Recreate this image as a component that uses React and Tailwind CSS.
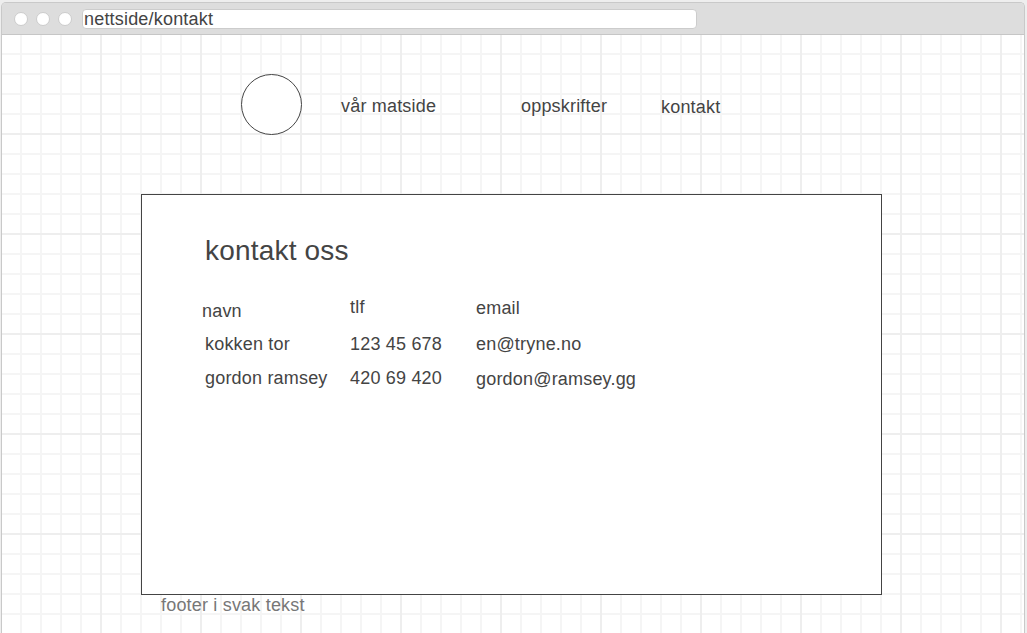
const nav = [
  { label: "vår matside", className: "w-[180px] pt-[22px]" },
  { label: "oppskrifter", className: "w-[140px] pt-[22px]" },
  { label: "kontakt", className: "pt-[23px]" },
];

const columns = [
  {
    className: "w-[148px] pt-1",
    cells: [
      { text: "navn", className: "" },
      { text: "kokken tor", className: "mt-[13px] pl-[3px]" },
      { text: "gordon ramsey", className: "mt-[14px] pl-[3px]" },
    ],
  },
  {
    className: "w-[126px]",
    cells: [
      { text: "tlf", className: "" },
      { text: "123 45 678", className: "mt-[17px]" },
      { text: "420 69 420", className: "mt-[14px]" },
    ],
  },
  {
    className: "pt-px",
    cells: [
      { text: "email", className: "" },
      { text: "en@tryne.no", className: "mt-4" },
      { text: "gordon@ramsey.gg", className: "mt-[15px]" },
    ],
  },
];

function AddressBar() {
  return (
    <header className="flex h-8 items-start border-b border-[#c6c6c6] bg-[#dddddd] pt-1.5 pl-3">
      <div className="flex gap-2 pt-[3px]">
        {[0, 1, 2].map((dot) => (
          <span key={dot} className="size-[14px] rounded-full border border-[#cccccc] bg-white" />
        ))}
      </div>
      <div className="ml-[10px] flex h-5 w-[615px] items-center rounded border border-[#cccccc] bg-white pl-px">
        nettside/kontakt
      </div>
    </header>
  );
}

function Grid({ children }) {
  return (
    <div className="h-[599px] bg-white bg-[linear-gradient(90deg,#eeeeee_2px,transparent_2px),linear-gradient(#eeeeee_2px,transparent_2px),linear-gradient(90deg,#f5f5f5_2px,transparent_2px),linear-gradient(#f5f5f5_2px,transparent_2px)] bg-[size:100px_100px,100px_100px,20px_20px,20px_20px] bg-[position:98px_0,0_98px,18px_0,0_18px]">
      {children}
    </div>
  );
}

export default function App() {
  return (
    <div className="h-[633px] w-[1027px] overflow-hidden bg-[#eeeeee] pt-[2px] pl-px font-['Liberation_Sans',Arial,sans-serif] text-[18px] leading-5 tracking-[0.19px] whitespace-nowrap text-[#444444]">
      <div className="w-[1024px] overflow-hidden rounded-t-[5px] border border-b-0 border-[#c9c9c9]">
        <AddressBar />
        <Grid>
          <nav className="flex h-[159px] pt-[39px] pl-[239px]">
            <div className="mr-[39px] size-[61px] rounded-full border border-[#444444] bg-white" />
            {nav.map((item) => (
              <a key={item.label} className={item.className}>{item.label}</a>
            ))}
          </nav>
          <main className="ml-[139px] h-[401px] w-[741px] border border-[#444444] bg-white pt-10 pl-[60px]">
            <h1 className="pl-[3px] text-[28px] leading-8 tracking-[0.19px]">kontakt oss</h1>
            <div className="flex pt-[30px]">
              {columns.map((column) => (
                <div key={column.cells[0].text} className={column.className}>
                  {column.cells.map((cell) => (
                    <p key={cell.text} className={cell.className}>{cell.text}</p>
                  ))}
                </div>
              ))}
            </div>
          </main>
          <footer className="pl-[159px] text-[#777777]">footer i svak tekst</footer>
        </Grid>
      </div>
    </div>
  );
}
